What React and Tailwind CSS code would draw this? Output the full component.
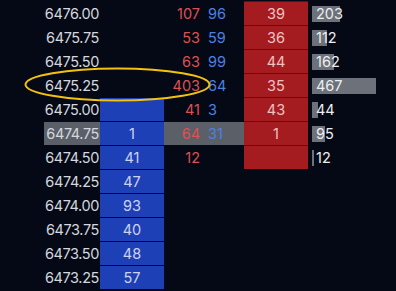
import React from "react";

const rows = [
  { p: "6476.00", r: "107", b: "96", ask: "39", v: 203 },
  { p: "6475.75", r: "53", b: "59", ask: "36", v: 112 },
  { p: "6475.50", r: "63", b: "99", ask: "44", v: 162 },
  { p: "6475.25", r: "403", b: "64", ask: "35", v: 467 },
  { p: "6475.00", r: "41", b: "3", ask: "43", v: 44, bid: "" },
  { p: "6474.75", r: "64", b: "31", ask: "1", v: 95, bid: "1", hl: true },
  { p: "6474.50", r: "12", b: "", ask: "", v: 12, bid: "41" },
  { p: "6474.25", bid: "47" },
  { p: "6474.00", bid: "93" },
  { p: "6473.75", bid: "40" },
  { p: "6473.50", bid: "48" },
  { p: "6473.25", bid: "57" },
];

export default function App() {
  return (
    <div
      className="relative w-[396px] h-[291px] overflow-hidden bg-[#050915] pt-px text-[14.5px]"
      style={{ fontFamily: "Inter, 'Noto Sans', sans-serif" }}
    >
      {rows.map((row, i) => (
        <div key={i} className="flex h-[24px]">
          <div className="w-[100px] flex border-t border-[#050915]">
            <div
              className={`ml-[44px] flex-1 flex items-center justify-end pr-px whitespace-nowrap tracking-[-0.4px] text-[#d3d7df] ${
                row.hl ? "bg-[#5b6068]" : ""
              }`}
            >
              {row.p}
            </div>
          </div>
          <div
            className={`w-[64px] flex items-center justify-center border-t border-[#050915] text-[#ccd3f2] ${
              row.bid !== undefined ? "bg-[#1e40b6]" : ""
            }`}
          >
            {row.bid}
          </div>
          <div
            className={`w-[80px] flex items-center border-t border-[#050915] ${
              row.hl ? "bg-[#5b6068]" : ""
            }`}
          >
            <div className="w-[36px] text-right text-[#de5152]">{row.r}</div>
            <div className="ml-[8px] text-[#4c80e2]">{row.b}</div>
          </div>
          <div
            className={`w-[64px] flex items-center justify-center border-t ${
              row.ask !== undefined
                ? "bg-[#a41c1f] border-[#5c1019] text-[#f1c2c4]"
                : "border-[#050915]"
            }`}
          >
            {row.ask}
          </div>
          <div className="ml-[4px] flex-1 relative flex items-center border-t border-[#050915]">
            {row.v !== undefined && (
              <>
                <div
                  className="absolute left-0 top-[4px] h-[16px] bg-[#6c717a]"
                  style={{ width: Math.max(2, Math.round((row.v / 467) * 64)) }}
                />
                <span className="relative pl-[4px] text-[#eceef2]">{row.v}</span>
              </>
            )}
          </div>
        </div>
      ))}
      <svg
        className="absolute left-0 top-0 pointer-events-none"
        width="396"
        height="291"
      >
        <ellipse
          cx="117.5"
          cy="84.5"
          rx="92"
          ry="16"
          fill="none"
          stroke="#f2c20f"
          strokeWidth="2"
        />
      </svg>
    </div>
  );
}
